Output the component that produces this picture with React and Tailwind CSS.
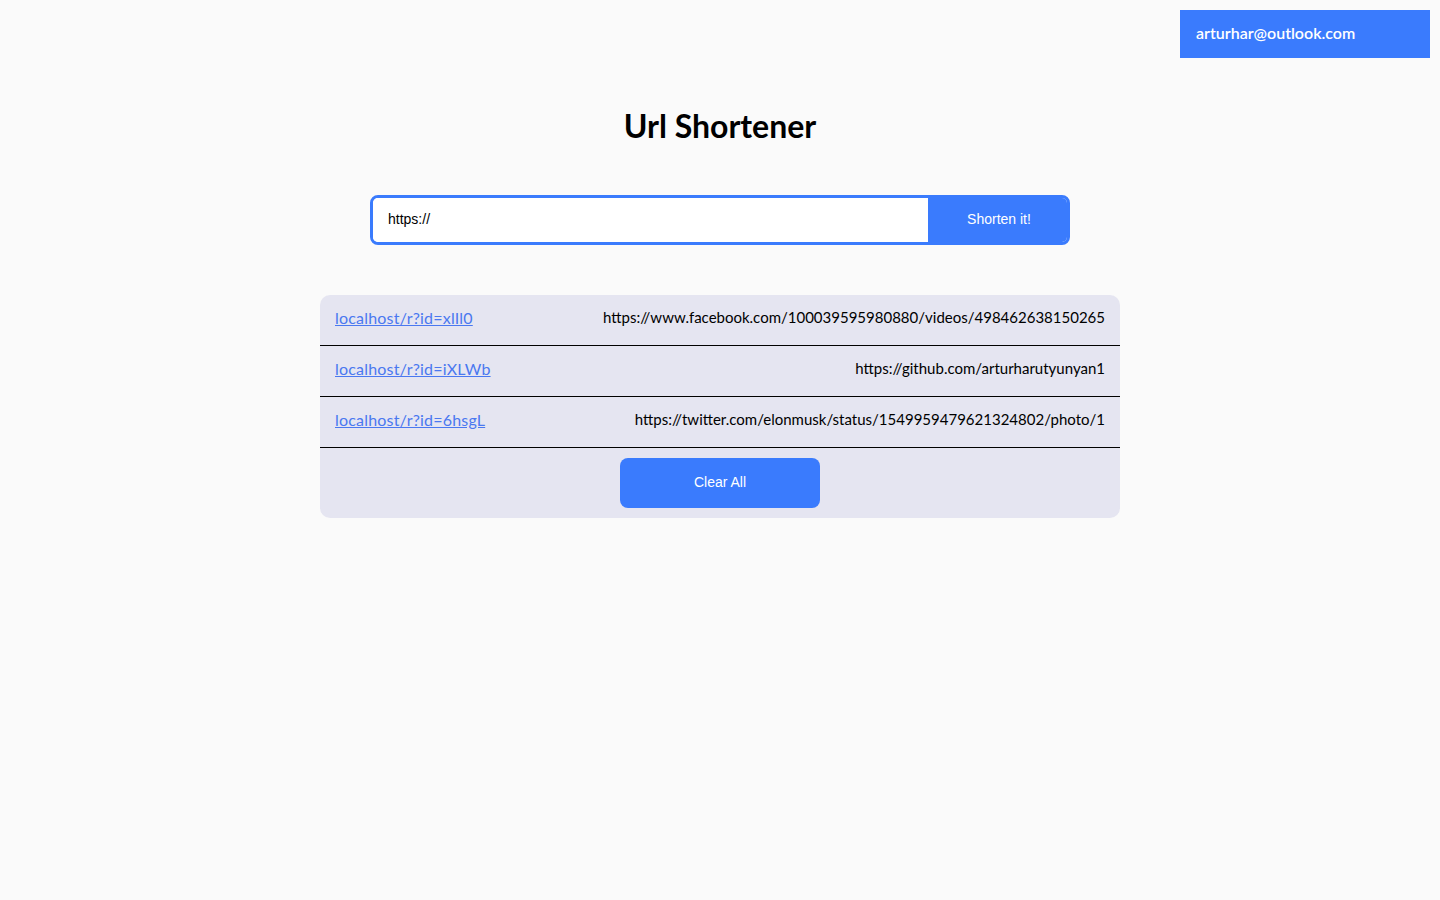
import React, { useState } from 'react';

const links = [
    { short: 'localhost/r?id=xlIl0', long: 'https://www.facebook.com/100039595980880/videos/498462638150265' },
    { short: 'localhost/r?id=iXLWb', long: 'https://github.com/arturharutyunyan1' },
    { short: 'localhost/r?id=6hsgL', long: 'https://twitter.com/elonmusk/status/1549959479621324802/photo/1' },
];

export default function App() {
    const [url, setUrl] = useState('https://');

    return (
        <div className="min-h-screen bg-[#fafafa] font-['Lato',sans-serif] text-black">
            {/* user badge */}
            <div className="flex justify-end pt-[10px] pr-[10px]">
                <div className="w-[250px] h-[48px] bg-[#3a7bfd] text-white text-[16px] font-semibold flex items-center px-4 pb-[3px]">
                    arturhar@outlook.com
                </div>
            </div>

            <h1 className="text-center text-[32px] font-bold mt-[43px] leading-[50px] pb-[2px]">Url Shortener</h1>

            {/* form */}
            <form className="mx-auto mt-[42px] w-[700px] h-[50px] flex rounded-lg border-[3px] border-[#3a7bfd] overflow-hidden" onSubmit={(e) => e.preventDefault()}>
                <input
                    value={url}
                    onChange={(e) => setUrl(e.target.value)}
                    className="flex-1 bg-white px-[15px] pb-[2px] text-[14px] font-['Liberation_Sans',Arial,sans-serif] outline-none"
                />
                <button className="w-[139px] pl-[3px] pb-[2px] bg-[#3a7bfd] text-white text-[14px] font-['Liberation_Sans',Arial,sans-serif]">Shorten it!</button>
            </form>

            {/* list */}
            <div className="mx-auto mt-[50px] w-[800px] bg-[#e5e5f1] rounded-[10px] overflow-hidden">
                {links.map((l) => (
                    <div key={l.short} className="h-[51px] border-b border-black flex items-center justify-between px-[15px] pb-[5px] text-[15px]">
                        <a href="#" className="text-[#4a78f0] underline text-[16px] tracking-[0.2px]">{l.short}</a>
                        <span>{l.long}</span>
                    </div>
                ))}
                <div className="flex justify-center py-[10px]">
                    <button className="w-[200px] h-[50px] pb-[2px] rounded-lg bg-[#3a7bfd] text-white text-[14px] font-['Liberation_Sans',Arial,sans-serif]">Clear All</button>
                </div>
            </div>
        </div>
    );
}
